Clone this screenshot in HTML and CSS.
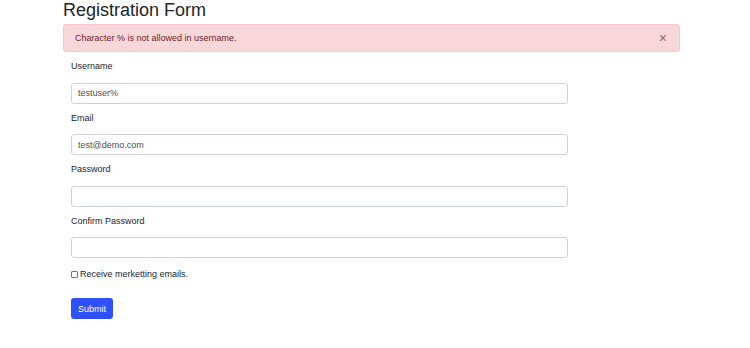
FILE: index.html
```html
<!DOCTYPE html>
<html>
<head>
<meta charset="utf-8">
<link rel="stylesheet" href="styles.css">
</head>
<body>
<div class="container">
  <h1 class="title">Registration Form</h1>
  <div class="alert">
    <span>Character % is not allowed in username.</span>
    <span class="close">&times;</span>
  </div>
  <form class="form">
    <div class="group">
      <label class="label">Username</label>
      <input class="input" type="text" value="testuser%">
    </div>
    <div class="group">
      <label class="label">Email</label>
      <input class="input" type="text" value="test@demo.com">
    </div>
    <div class="group">
      <label class="label">Password</label>
      <input class="input" type="password">
    </div>
    <div class="group">
      <label class="label">Confirm Password</label>
      <input class="input" type="password">
    </div>
    <div class="check">
      <input class="box" type="checkbox">
      <span>Receive merketting emails.</span>
    </div>
    <button class="btn" type="button">Submit</button>
  </form>
</div>
</body>
</html>
```
FILE: styles.css
```css
* { box-sizing: border-box; }
html, body { margin: 0; padding: 0; background: #fff; }
body {
  font-family: "Liberation Sans", Arial, sans-serif;
  font-size: 9px;
  color: #212529;
}
.container {
  width: 617px;
  margin-left: 63px;
}
.title {
  margin: 0 0 4px 0;
  padding-top: 1px;
  font-size: 18px;
  font-weight: normal;
  line-height: 19px;
  color: #212529;
}
.alert {
  display: flex;
  justify-content: space-between;
  align-items: center;
  height: 28px;
  padding: 0 12px 0 11px;
  background: #f8d7da;
  border: 1px solid #f5c6cb;
  border-radius: 3px;
  color: #721c24;
  line-height: 14px;
}
.close {
  font-size: 14px;
  font-weight: normal;
  color: #8c6a6e;
}
.form {
  padding: 6px 0 0 8px;
}
.group {
  margin-bottom: 6px;
}
.label {
  display: block;
  line-height: 16px;
  margin-bottom: 8.5px;
}
.input {
  display: block;
  width: 497px;
  height: 21px;
  padding: 0 6px;
  border: 1px solid #ced4da;
  border-radius: 3px;
  font-family: inherit;
  font-size: 9px;
  color: #495057;
  background: #fff;
}
.check {
  display: flex;
  align-items: center;
  gap: 2px;
  line-height: 16px;
  padding-top: 2px;
  margin-bottom: 16px;
}
.box {
  appearance: none;
  margin: 0;
  width: 7px;
  height: 7px;
  border: 1px solid #767676;
  border-radius: 1px;
  background: #fff;
}
.btn {
  display: block;
  width: 42px;
  height: 21px;
  padding: 0;
  border: 0;
  border-radius: 3px;
  background: #304ffe;
  color: #fff;
  font-family: inherit;
  font-size: 9px;
}
```
